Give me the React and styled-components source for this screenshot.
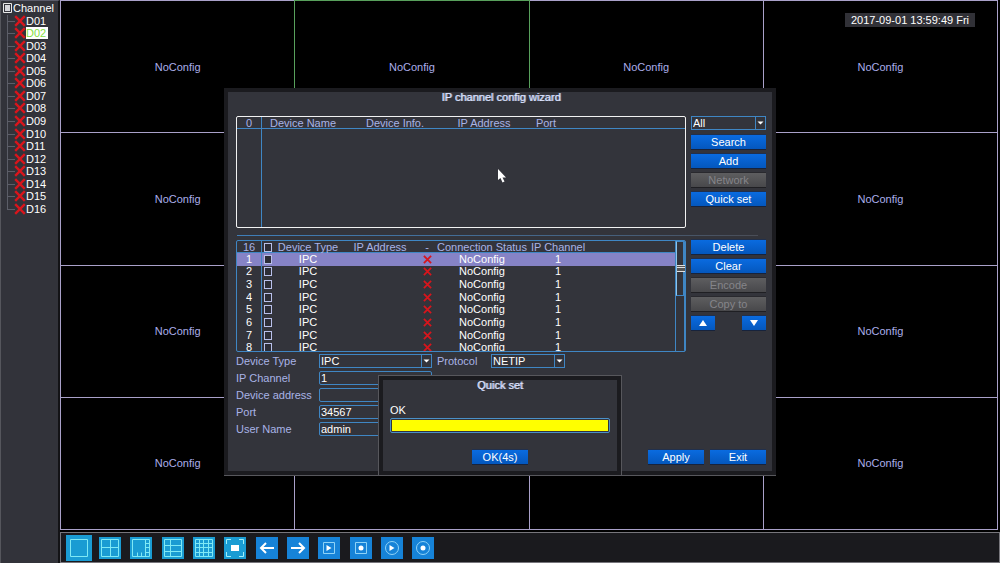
import React from 'react';
import styled, { createGlobalStyle, css } from 'styled-components';

const GlobalStyle = createGlobalStyle`
  * {
    box-sizing: border-box;
  }

  body {
    margin: 0;
    background: #000;
    color: #fff;
    font: 11px/12px 'Liberation Sans', Arial, sans-serif;
  }

  button,
  input,
  select {
    margin: 0;
    padding: 0;
    border: 0;
    border-radius: 0;
    background: none;
    color: inherit;
    font: inherit;
  }
`;

const Page = styled.div`
  position: relative;
  display: flex;
  min-height: 100vh;
`;

const Sidebar = styled.aside`
  flex: 0 0 60px;
  padding: 1px 0 0 2px;
  background: #32333a;
  border-top: 1px solid #5c5d6c;
  border-left: 1px solid #55565c;
  border-right: 2px solid #131316;
`;

const Tree = styled.ul`
  display: grid;
  grid-template-rows: repeat(17, 1fr);
  height: 213px;
  margin: 0;
  padding: 0;
  list-style: none;
`;

const TreeRoot = styled.li`
  display: flex;
  align-items: center;
  gap: 1px;
`;

const TreeItem = styled.li`
  position: relative;
  display: flex;
  align-items: center;
  padding-left: 11px;

  &::before {
    content: '';
    position: absolute;
    left: 4px;
    top: 0;
    width: 7px;
    height: 50%;
    border-left: 1px solid #5c5e68;
    border-bottom: 1px solid #5c5e68;
  }

  &:not(:last-child)::after {
    content: '';
    position: absolute;
    left: 4px;
    top: 50%;
    bottom: 0;
    border-left: 1px solid #5c5e68;
  }

  button {
    height: 12px;
    padding-right: 2px;
    background: ${({ $selected }) => ($selected ? '#fff' : 'transparent')};
    color: ${({ $selected }) => ($selected ? '#84e043' : '#fff')};
  }
`;

const Main = styled.main`
  flex: 1;
  display: flex;
  flex-direction: column;
  background: #000;
`;

const VideoGrid = styled.div`
  flex: 1;
  display: grid;
  grid-template: repeat(4, 1fr) / repeat(4, 1fr);
  gap: 1px;
  margin-right: 2px;
  padding: 1px;
  background: #a9a1c9;
`;

const VideoCell = styled.div`
  display: grid;
  place-items: center;
  background: #000;
  color: #abaeea;
  box-shadow: ${({ $selected }) => ($selected ? '0 0 0 1px #58a05c' : 'none')};
`;

const Clock = styled.time`
  position: absolute;
  top: 13px;
  right: 25px;
  width: 130px;
  padding: 1px 0;
  background: #313137;
  text-align: center;
`;

const Toolbar = styled.nav`
  margin-top: 2px;
  height: 31px;
  padding-left: 2px;
  background: #1a1a1e;
  border: 1px solid #77767c;
`;

const ToolList = styled.div`
  display: grid;
  grid-template-columns: repeat(12, 1fr);
  place-items: center;
  width: 376px;
  height: 100%;
`;

const ToolButton = styled.button`
  display: grid;
  place-items: center;
  width: ${({ $selected }) => ($selected ? '26px' : '22px')};
  height: ${({ $selected }) => ($selected ? '26px' : '22px')};
  background: ${({ $kind }) => ($kind === 'layout' ? '#1a9cd3' : '#1683d8')};

  svg {
    display: block;
  }
`;

const Overlay = styled.div`
  position: absolute;
  inset: 0;
  display: grid;
  place-items: center;
`;

const dialogFrame = css`
  background: #33343b;
  border: 4px solid #1b1b1f;
`;

const Dialog = styled.section`
  ${dialogFrame}
  position: relative;
  width: 100%;
  max-width: 552px;
  padding: 0 6px 7px 8px;
  box-shadow: 0 1px #57575c;
`;

const DialogTitle = styled.h2`
  margin: 0 0 13px;
  color: #dde4ff;
  font-size: 11px;
  font-weight: normal;
  line-height: 11px;
  text-align: center;
  text-shadow: 1px 0 #a9afd0;
`;

const Section = styled.div`
  display: grid;
  grid-template-columns: 1fr 75px;
  gap: 5px;
`;

const SideColumn = styled.div`
  display: flex;
  flex-direction: column;
  gap: 5px;
`;

const ArrowRow = styled.div`
  display: flex;
  justify-content: space-between;
`;

const Button = styled.button`
  display: flex;
  align-items: center;
  justify-content: center;
  width: ${({ $width }) => $width || '100%'};
  height: 14px;
  background: linear-gradient(#0a6be0, #0457bd);
  box-shadow: 0 1px #17233c, 0 -1px #20304e;

  &:disabled {
    background: linear-gradient(#5e5e60, #48484b);
    box-shadow: 0 1px #1f1f23, 0 -1px #29292e;
    color: #85858a;
  }
`;

const Divider = styled.hr`
  height: 1px;
  margin: 7px 8px 4px 1px;
  border: 0;
  background: linear-gradient(90deg, #3f7fba, #46617f 70%, #4a4d57);
`;

const ListBox = styled.div`
  display: flex;
  height: 112px;
  overflow: hidden;
  border: 1px solid ${({ $focused }) => ($focused ? '#f2f2f2' : '#3f86c4')};
  border-radius: 2px;
`;

const Table = styled.table`
  flex: 1;
  height: ${({ $height }) => $height};
  table-layout: fixed;
  border-collapse: separate;
  border-spacing: 0;
  text-align: center;

  th,
  td {
    padding: 0;
    line-height: 11px;
    white-space: nowrap;
  }

  th {
    height: 12px;
    padding-top: 2px;
    border-bottom: 1px solid #3f86c4;
    color: #a9b3e6;
    font-weight: normal;
    line-height: 9px;
  }

  th:first-child,
  td:first-child {
    border-right: 1px solid #3f86c4;
  }

  input,
  svg {
    display: block;
    margin: 0 auto;
  }
`;

const DeviceRow = styled.tr`
  background: ${({ $selected }) => ($selected ? '#8683c6' : 'transparent')};
`;

const CheckBox = styled.input.attrs({ type: 'checkbox' })`
  appearance: none;
  width: 8px;
  height: 9px;
  border: 1px solid #b9c0ea;
  background: #2c2d36;
`;

const ScrollTrack = styled.div`
  width: 10px;
  border-left: 1px solid #3f86c4;
  border-right: 1px solid #3f86c4;
`;

const ScrollThumb = styled.div`
  display: grid;
  place-items: center;
  height: 55px;
  border: 1px solid #3f86c4;
  border-left-color: #8cc4ea;

  &::before {
    content: '';
    width: 8px;
    height: 5px;
    border-top: 1px solid #e0e0e0;
    border-bottom: 1px solid #e0e0e0;
    background: linear-gradient(#555 1px, #e0e0e0 1px 2px, #555 2px);
  }
`;

const Form = styled.form`
  display: grid;
  gap: 3px;
  margin-top: 2px;
`;

const FieldRow = styled.div`
  display: flex;
  align-items: center;
  height: 14px;
`;

const Label = styled.label`
  flex: 0 0 ${({ $width }) => $width};
  color: #a9b3e6;
`;

const fieldBox = css`
  width: ${({ $width }) => $width || '100%'};
  height: 14px;
  border: 1px solid #3f86c4;
`;

const TextInput = styled.input`
  ${fieldBox}
  padding-left: 1px;
  border-radius: 2px;
`;

const SelectBox = styled.span`
  ${fieldBox}
  position: relative;
  display: flex;
  margin-right: ${({ $after }) => $after || '0'};

  select {
    flex: 1;
    padding-left: 1px;
    appearance: none;
    line-height: 12px;
  }

  option {
    background: #33343b;
  }

  svg {
    position: absolute;
    right: 0;
    top: 0;
    pointer-events: none;
  }
`;

const Footer = styled.footer`
  display: flex;
  justify-content: flex-end;
  gap: 6px;
  margin-top: 14px;
`;

const QuickSet = styled.section`
  ${dialogFrame}
  position: absolute;
  bottom: -4px;
  left: 50%;
  transform: translateX(-50%);
  display: flex;
  flex-direction: column;
  align-items: center;
  width: 242px;
  padding: 0 7px 7px;
  box-shadow: 0 0 0 1px #57575c;
`;

const ProgressLabel = styled.label`
  align-self: stretch;
  margin-bottom: 2px;
`;

const ProgressBar = styled.progress`
  appearance: none;
  width: 100%;
  height: 15px;
  margin-bottom: 17px;
  padding: 1px;
  border: 1px solid #4a90c8;
  border-radius: 2px;

  &::-webkit-progress-bar {
    background: #33343b;
  }

  &::-webkit-progress-value {
    background: #ff0;
  }
`;

const Pointer = styled.svg`
  position: absolute;
  left: 269px;
  top: 77px;
`;

const channels = Array.from({ length: 16 }, (_, i) => `D${String(i + 1).padStart(2, '0')}`);

// these tiles lie behind the wizard, so their status is left out
const coveredChannels = ['D06', 'D07', 'D10', 'D11', 'D14', 'D15'];

const devices = Array.from({ length: 8 }, (_, i) => ({
  id: i + 1,
  type: 'IPC',
  address: '',
  status: 'NoConfig',
  channel: 1,
}));

const RedCross = ({ size }) => (
  <svg width={size} height={size} viewBox="0 0 10 10" aria-label="offline">
    <path d="M1 1L9 9M9 1L1 9" stroke="#d8151c" strokeWidth="2" />
  </svg>
);

const Select = ({ id, value, width, after, label }) => (
  <SelectBox $width={width} $after={after}>
    <select id={id} aria-label={label} defaultValue={value}>
      <option>{value}</option>
    </select>
    <svg width="10" height="12">
      <path d="M0.5 0V12" stroke="#3f86c4" />
      <path d="M2.5 4.5H8.5L5.5 7.5Z" fill="#fff" />
    </svg>
  </SelectBox>
);

const layoutIcon = (d) => (
  <svg width="20" height="20" fill="none" stroke="#7fe9f5">
    <path d={`M1.5 1.5H18.5V18.5H1.5Z${d}`} />
  </svg>
);

const playIcon = <path d="M7.5 7L12.5 10L7.5 13Z" fill="#fff" stroke="none" />;
const dotIcon = <circle cx="10" cy="10" r="2.5" fill="#fff" stroke="none" />;
const squareFrame = <path d="M4.5 4.5H15.5V15.5H4.5Z" />;
const roundFrame = <circle cx="10" cy="10" r="6.5" />;

const actionIcon = (content) => (
  <svg width="20" height="20" fill="none" stroke="#8fd3f7">
    {content}
  </svg>
);

const tools = [
  { name: 'Single view', kind: 'layout', selected: true, icon: layoutIcon('') },
  { name: 'Four views', kind: 'layout', icon: layoutIcon('M10.5 1.5V18.5M1.5 9.5H18.5') },
  {
    name: 'Eight views',
    kind: 'layout',
    icon: layoutIcon('M14.5 1.5V18.5M14.5 5.5H18.5M14.5 9.5H18.5M14.5 14.5H18.5M6.5 14.5V18.5M10.5 14.5V18.5'),
  },
  { name: 'Nine views', kind: 'layout', icon: layoutIcon('M7.5 1.5V18.5M1.5 7.5H18.5M1.5 13.5H18.5') },
  {
    name: 'Sixteen views',
    kind: 'layout',
    icon: layoutIcon('M5.5 1.5V18.5M9.5 1.5V18.5M14.5 1.5V18.5M1.5 5.5H18.5M1.5 9.5H18.5M1.5 14.5H18.5'),
  },
  {
    name: 'Full screen',
    kind: 'layout',
    icon: (
      <svg width="20" height="20" fill="none" stroke="#9ff0fa">
        <path d="M1.5 6V1.5H6M14 1.5H18.5V6M18.5 14V18.5H14M6 18.5H1.5V14" />
        <path d="M6 7H14V13H6Z" fill="#fff" stroke="none" />
      </svg>
    ),
  },
  {
    name: 'Previous',
    icon: (
      <svg width="20" height="20" fill="none" stroke="#fff" strokeWidth="2">
        <path d="M4 10H17M9 5L4 10L9 15" />
      </svg>
    ),
  },
  {
    name: 'Next',
    icon: (
      <svg width="20" height="20" fill="none" stroke="#fff" strokeWidth="2">
        <path d="M3 10H16M11 5L16 10L11 15" />
      </svg>
    ),
  },
  { name: 'Play channel', icon: actionIcon(<>{squareFrame}{playIcon}</>) },
  { name: 'Record channel', icon: actionIcon(<>{squareFrame}{dotIcon}</>) },
  { name: 'Play all', icon: actionIcon(<>{roundFrame}{playIcon}</>) },
  { name: 'Record all', icon: actionIcon(<>{roundFrame}{dotIcon}</>) },
];

const ChannelTree = () => (
  <Sidebar>
    <Tree>
      <TreeRoot>
        <svg width="9" height="10">
          <path d="M0.5 0.5H8.5V9.5H0.5Z" fill="#33343b" stroke="#e8e8e8" />
          <path d="M2 2H7V8H2Z" fill="#d5d5da" />
        </svg>
        Channel
      </TreeRoot>
      {channels.map((name) => (
        <TreeItem key={name} $selected={name === 'D02'}>
          <RedCross size={12} />
          <button type="button">{name}</button>
        </TreeItem>
      ))}
    </Tree>
  </Sidebar>
);

const FoundDevices = () => (
  <ListBox $focused>
    <Table $height="110px">
      <colgroup>
        <col width="25" />
        <col width="82" />
        <col width="102" />
        <col width="76" />
        <col width="48" />
        <col />
      </colgroup>
      <thead>
        <tr>
          <th>0</th>
          <th>Device Name</th>
          <th>Device Info.</th>
          <th>IP Address</th>
          <th>Port</th>
          <th />
        </tr>
      </thead>
      <tbody>
        <tr>
          <td />
          <td colSpan="5" />
        </tr>
      </tbody>
    </Table>
  </ListBox>
);

const ChannelDevices = () => (
  <ListBox>
    <Table $height="113px">
      <colgroup>
        <col width="25" />
        <col width="12" />
        <col width="68" />
        <col width="76" />
        <col width="18" />
        <col width="92" />
        <col width="60" />
        <col />
      </colgroup>
      <thead>
        <tr>
          <th>16</th>
          <th>
            <CheckBox aria-label="Select all" />
          </th>
          <th>Device Type</th>
          <th>IP Address</th>
          <th>-</th>
          <th>Connection Status</th>
          <th>IP Channel</th>
          <th />
        </tr>
      </thead>
      <tbody>
        {devices.map(({ id, type, address, status, channel }) => (
          <DeviceRow key={id} $selected={id === 1}>
            <td>{id}</td>
            <td>
              <CheckBox aria-label={`Select device ${id}`} />
            </td>
            <td>{type}</td>
            <td>{address}</td>
            <td>
              <RedCross size={9} />
            </td>
            <td>{status}</td>
            <td>{channel}</td>
            <td />
          </DeviceRow>
        ))}
      </tbody>
    </Table>
    <ScrollTrack>
      <ScrollThumb />
    </ScrollTrack>
  </ListBox>
);

const DeviceForm = () => (
  <Form>
    <FieldRow>
      <Label $width="83px" htmlFor="deviceType">Device Type</Label>
      <Select id="deviceType" value="IPC" width="113px" after="5px" />
      <Label $width="54px" htmlFor="protocol">Protocol</Label>
      <Select id="protocol" value="NETIP" width="74px" />
    </FieldRow>
    <FieldRow>
      <Label $width="83px" htmlFor="ipChannel">IP Channel</Label>
      <TextInput id="ipChannel" $width="113px" defaultValue="1" />
    </FieldRow>
    <FieldRow>
      <Label $width="83px" htmlFor="address">Device address</Label>
      <TextInput id="address" $width="113px" />
    </FieldRow>
    <FieldRow>
      <Label $width="83px" htmlFor="port">Port</Label>
      <TextInput id="port" $width="113px" defaultValue="34567" />
    </FieldRow>
    <FieldRow>
      <Label $width="83px" htmlFor="userName">User Name</Label>
      <TextInput id="userName" $width="113px" defaultValue="admin" />
    </FieldRow>
  </Form>
);

const App = () => (
  <Page>
    <GlobalStyle />
    <ChannelTree />
    <Main>
      <VideoGrid>
        {channels.map((name) => (
          <VideoCell key={name} $selected={name === 'D02'}>
            {!coveredChannels.includes(name) && 'NoConfig'}
          </VideoCell>
        ))}
      </VideoGrid>
      <Toolbar>
        <ToolList>
          {tools.map(({ name, kind, selected, icon }) => (
            <ToolButton key={name} type="button" aria-label={name} $kind={kind} $selected={selected}>
              {icon}
            </ToolButton>
          ))}
        </ToolList>
      </Toolbar>
    </Main>
    <Clock>2017-09-01 13:59:49 Fri</Clock>

    <Overlay>
      <Dialog>
        <DialogTitle>IP channel config wizard</DialogTitle>
        <Section>
          <FoundDevices />
          <SideColumn>
            <Select value="All" label="Device filter" />
            <Button type="button">Search</Button>
            <Button type="button">Add</Button>
            <Button type="button" disabled>Network</Button>
            <Button type="button">Quick set</Button>
          </SideColumn>
        </Section>
        <Divider />
        <Section>
          <ChannelDevices />
          <SideColumn>
            <Button type="button">Delete</Button>
            <Button type="button">Clear</Button>
            <Button type="button" disabled>Encode</Button>
            <Button type="button" disabled>Copy to</Button>
            <ArrowRow>
              <Button type="button" $width="24px" aria-label="Move up">
                <svg width="8" height="6"><path d="M4 0L8 6H0Z" fill="#fff" /></svg>
              </Button>
              <Button type="button" $width="24px" aria-label="Move down">
                <svg width="8" height="6"><path d="M0 0H8L4 6Z" fill="#fff" /></svg>
              </Button>
            </ArrowRow>
          </SideColumn>
        </Section>
        <DeviceForm />
        <Footer>
          <Button type="button" $width="56px">Apply</Button>
          <Button type="button" $width="56px">Exit</Button>
        </Footer>

        <QuickSet>
          <DialogTitle>Quick set</DialogTitle>
          <ProgressLabel htmlFor="progress">OK</ProgressLabel>
          <ProgressBar id="progress" value="100" max="100" />
          <Button type="button" $width="56px">OK(4s)</Button>
        </QuickSet>

        <Pointer width="9" height="14" viewBox="0 0 9 14">
          <path d="M1 0V11L3.500 9L5.500 13.500L7.500 12.500L5.500 8.500H9Z" fill="#fff" />
        </Pointer>
      </Dialog>
    </Overlay>
  </Page>
);

export default App;
